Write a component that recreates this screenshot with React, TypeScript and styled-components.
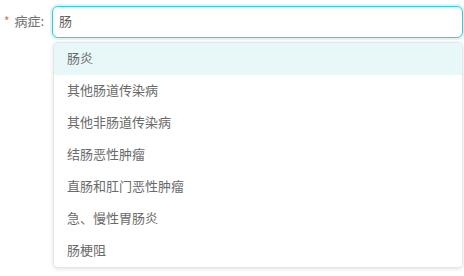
import styled, { createGlobalStyle } from 'styled-components';

const GlobalStyle = createGlobalStyle`
  html, body {
    margin: 0;
    padding: 0;
    background: #ffffff;
    font-family: "Noto Sans CJK SC", "Liberation Sans", sans-serif;
  }
`;

const options: string[] = [
  '肠炎',
  '其他肠道传染病',
  '其他非肠道传染病',
  '结肠恶性肿瘤',
  '直肠和肛门恶性肿瘤',
  '急、慢性胃肠炎',
  '肠梗阻',
];

function App() {
  return (
    <>
      <GlobalStyle />
      <Form.Wrapper>
        <Form.Row>
          <Form.Label>
            <Form.Star>*</Form.Star>
            {'病症:'}
          </Form.Label>
          <Form.Field>
            <Form.Input defaultValue="肠" />
            <Form.Menu>
              {options.map((item, i) => (
                <Form.Option key={item} $active={i === 0}>
                  {item}
                </Form.Option>
              ))}
            </Form.Menu>
          </Form.Field>
        </Form.Row>
      </Form.Wrapper>
    </>
  );
}

const Form = {
  Wrapper: styled.div`
    width: 464px;
    height: 276px;
    padding-top: 6px;
    box-sizing: border-box;
  `,
  Row: styled.div`
    display: flex;
    align-items: flex-start;
  `,
  Label: styled.label`
    width: 52px;
    height: 32px;
    display: flex;
    align-items: center;
    padding: 0 0 3px 4px;
    box-sizing: border-box;
    font-size: 13px;
    color: #707070;
    white-space: nowrap;
  `,
  Star: styled.span`
    color: #f56c2c;
    margin-right: 5px;
    font-size: 12px;
  `,
  Field: styled.div`
    flex: 1;
    display: flex;
    flex-direction: column;
    gap: 4px;
    padding-right: 1px;
  `,
  Input: styled.input`
    height: 32px;
    box-sizing: border-box;
    border: 1px solid #36ccd6;
    border-radius: 6px;
    box-shadow: 0 0 0 2px rgba(54, 204, 214, 0.18);
    padding: 0 6px 3px;
    font-family: inherit;
    font-size: 13px;
    color: #606060;
    outline: none;
  `,
  Menu: styled.div`
    margin-left: 1px;
    border: 1px solid #e4e7ed;
    border-radius: 5px;
    box-shadow: 0 1px 4px rgba(0, 0, 0, 0.12);
    overflow: hidden;
    background: #ffffff;
  `,
  Option: styled.div<{ $active: boolean }>`
    height: 32px;
    display: flex;
    align-items: center;
    padding: 0 0 3px 13px;
    box-sizing: border-box;
    font-size: 13px;
    color: #6a6a6a;
    background: ${(p) => (p.$active ? '#e8f8f9' : '#ffffff')};
  `,
};

export default App;
